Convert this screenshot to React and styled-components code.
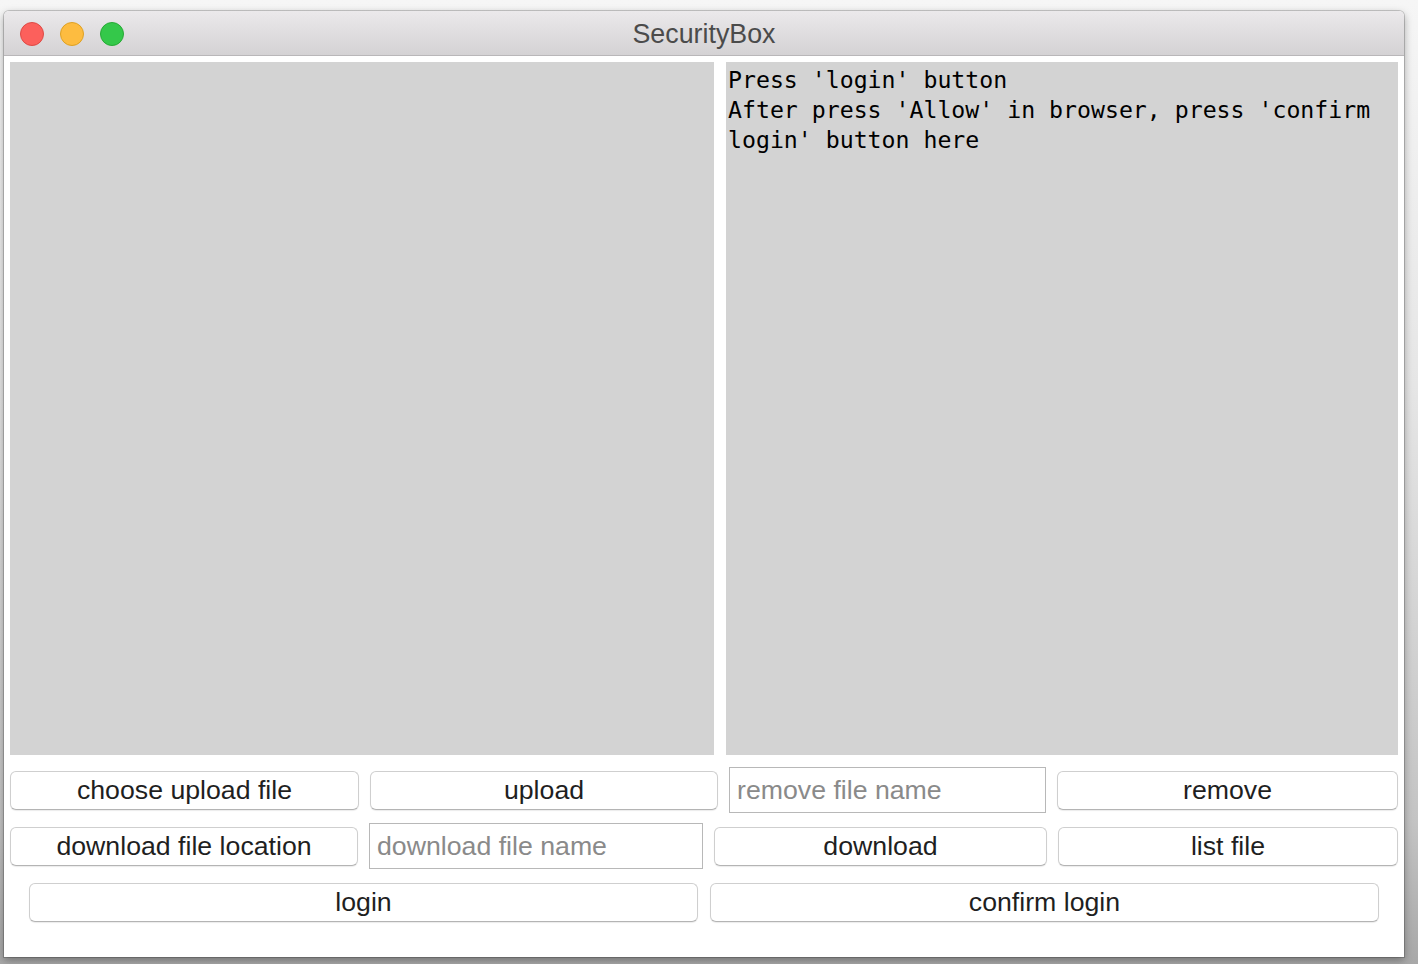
import React from 'react'
import styled, { createGlobalStyle } from 'styled-components'

const GlobalStyle = createGlobalStyle`
    html, body {
        margin: 0;
        padding: 0;
        height: 100%;
    }
    body {
        background: linear-gradient(#f6f6f6 0%, #e6e6e6 40%, #c4c4c4 85%, #a8a8a8 100%);
        font-family: "Liberation Sans", Arial, sans-serif;
        overflow: hidden;
    }
`

const App = () => {
    return (
        <>
            <GlobalStyle />
            <Window>
                <TitleBar>
                    <Lights>
                        <Light color="#fc605c" edge="#de4a45" />
                        <Light color="#fdbc40" edge="#dea123" />
                        <Light color="#34c84a" edge="#27aa35" />
                    </Lights>
                    <Title>SecurityBox</Title>
                </TitleBar>
                <Content>
                    <Panels>
                        <Panel />
                        <Panel>
                            <Log>
                                {"Press 'login' button\nAfter press 'Allow' in browser, press 'confirm login' button here"}
                            </Log>
                        </Panel>
                    </Panels>
                    <Controls>
                        <Row cols="349px 348px 317px 341px">
                            <Button>choose upload file</Button>
                            <Button>upload</Button>
                            <Field placeholder="remove file name" />
                            <Button>remove</Button>
                        </Row>
                        <Row cols="348px 334px 333px 340px">
                            <Button>download file location</Button>
                            <Field placeholder="download file name" />
                            <Button>download</Button>
                            <Button>list file</Button>
                        </Row>
                        <Row cols="1fr 1fr" inset="19px" spacing="12px">
                            <Button>login</Button>
                            <Button>confirm login</Button>
                        </Row>
                    </Controls>
                </Content>
            </Window>
        </>
    )
}

const Window = styled.div`
    position: absolute;
    left: 4px;
    top: 11px;
    width: 1400px;
    height: 946px;
    display: flex;
    flex-direction: column;
    background: #ffffff;
    border-radius: 5px 5px 0 0;
    box-shadow: 0 0 0 1px rgba(0, 0, 0, 0.18), 0 3px 8px rgba(0, 0, 0, 0.35);
    overflow: hidden;
`

const TitleBar = styled.div`
    position: relative;
    height: 44px;
    flex: none;
    display: flex;
    align-items: center;
    justify-content: center;
    background: linear-gradient(#ebe9eb, #d4d2d4);
    border-bottom: 1px solid #b9b7b9;
`

const Lights = styled.div`
    position: absolute;
    left: 16px;
    top: 11px;
    display: flex;
    gap: 16px;
`

const Light = styled.span`
    width: 24px;
    height: 24px;
    box-sizing: border-box;
    border-radius: 50%;
    background: ${p => p.color};
    border: 1px solid ${p => p.edge};
`

const Title = styled.div`
    font-size: 26.8px;
    color: #4b4b4b;
    margin-top: 2px;
`

const Content = styled.div`
    flex: 1;
    display: flex;
    flex-direction: column;
    padding: 6px 6px 0;
`

const Panels = styled.div`
    display: grid;
    grid-template-columns: 704px 672px;
    gap: 12px;
    height: 693px;
`

const Panel = styled.div`
    background: #d3d3d3;
    padding: 0 2px;
    overflow: hidden;
`

const Log = styled.div`
    font-family: "DejaVu Sans Mono", Menlo, monospace;
    font-size: 23.2px;
    line-height: 30px;
    color: #000000;
    white-space: pre-wrap;
    padding-top: 3px;
`

const Controls = styled.div`
    display: flex;
    flex-direction: column;
    gap: 10px;
    margin-top: 12px;
`

const Row = styled.div`
    display: grid;
    grid-template-columns: ${p => p.cols};
    column-gap: ${p => p.spacing || '11px'};
    padding: 0 ${p => p.inset || '0'};
    height: 46px;
    align-items: center;
`

const Button = styled.button`
    height: 39px;
    box-sizing: border-box;
    background: #ffffff;
    border: 1px solid #cfcfcf;
    border-bottom-color: #b4b4b4;
    border-radius: 6px;
    box-shadow: 0 1px 1px rgba(0, 0, 0, 0.08);
    font-family: "Liberation Sans", Arial, sans-serif;
    font-size: 26.7px;
    color: #1f1f1f;
    padding: 0;
    line-height: 36px;
`

const Field = styled.input`
    height: 46px;
    box-sizing: border-box;
    border: 1px solid #b8b8b8;
    border-radius: 0;
    padding: 0 7px;
    font-family: "Liberation Sans", Arial, sans-serif;
    font-size: 26.7px;
    color: #1f1f1f;
    outline: none;
    &::placeholder {
        color: #8a8a8a;
    }
`

export default App
